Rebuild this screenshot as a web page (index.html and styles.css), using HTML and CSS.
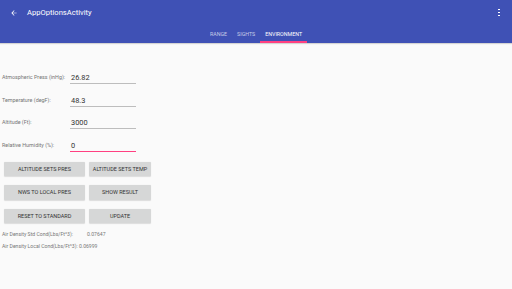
FILE: index.html
```html
<!DOCTYPE html>
<html lang="en">
<head>
    <meta charset="UTF-8">
    <meta name="viewport" content="width=device-width, initial-scale=1.0">
    <title>AppOptionsActivity</title>
    <link rel="stylesheet" href="styles.css">
</head>
<body>

    <!-- App Bar -->
    <header class="appbar">
        <div class="toolbar">
            <svg class="back" width="8" height="8" viewBox="0 0 24 24">
                <path d="M20 11H7.83l5.59-5.59L12 4l-8 8 8 8 1.41-1.41L7.83 13H20v-2z" fill="#fff"/>
            </svg>
            <span class="title">AppOptionsActivity</span>
            <span class="overflow"><i></i><i></i><i></i></span>
        </div>
        <nav class="tabs">
            <span class="tab">RANGE</span>
            <span class="tab">SIGHTS</span>
            <span class="tab active">ENVIRONMENT</span>
        </nav>
    </header>

    <!-- Environment Form -->
    <main class="content">
        <div class="field">
            <label class="field-label">Atmospheric Press (inHg):</label>
            <div class="field-input">26.82</div>
        </div>
        <div class="field">
            <label class="field-label">Temperature (degF):</label>
            <div class="field-input">48.3</div>
        </div>
        <div class="field">
            <label class="field-label">Altitude (Ft):</label>
            <div class="field-input">3000</div>
        </div>
        <div class="field">
            <label class="field-label">Relative Humidity (%):</label>
            <div class="field-input focused">0</div>
        </div>

        <div class="buttons">
            <div class="btn-row">
                <button class="btn wide">ALTITUDE SETS PRES</button>
                <button class="btn">ALTITUDE SETS TEMP</button>
            </div>
            <div class="btn-row">
                <button class="btn wide">NWS TO LOCAL PRES</button>
                <button class="btn">SHOW RESULT</button>
            </div>
            <div class="btn-row">
                <button class="btn wide">RESET TO STANDARD</button>
                <button class="btn">UPDATE</button>
            </div>
        </div>

        <div class="results">
            <p class="result"><span class="result-label">Air Density Std Cond(Lbs/Ft^3):</span>0.07647</p>
            <p class="result">Air Density Local Cond(Lbs/Ft^3): 0.06999</p>
        </div>
    </main>

</body>
</html>
```

FILE: styles.css
```css
/* General Page Styles */
body {
    font-family: 'Roboto', 'Liberation Sans', sans-serif;
    background: #fafafa;
    color: #333;
    margin: 0;
}

/* App Bar */
.appbar {
    background: #3f51b5;
    height: 43px;
    box-shadow: 0 1px 1px rgba(0, 0, 0, 0.15);
    display: flex;
    flex-direction: column;
}

.toolbar {
    height: 25px;
    display: flex;
    align-items: center;
    padding: 0 0 0 10px;
}

.toolbar .back {
    width: 8px;
    height: 8px;
}

.toolbar .title {
    color: #fff;
    font-size: 7.6px;
    font-weight: 400;
    margin-left: 9px;
}

.toolbar .overflow {
    margin-left: auto;
    margin-right: 12px;
    display: flex;
    flex-direction: column;
    gap: 1.3px;
}

.toolbar .overflow i {
    display: block;
    width: 1.7px;
    height: 1.7px;
    background: #fff;
}

/* Tabs */
.tabs {
    flex: 1;
    display: flex;
    justify-content: center;
}

.tab {
    padding: 1px 5px 0;
    font-size: 5.3px;
    font-weight: 400;
    color: rgba(255, 255, 255, 0.7);
    display: flex;
    align-items: center;
    border-bottom: 2px solid transparent;
}

.tab.active {
    color: #fff;
    border-bottom-color: #ff4081;
}

/* Form */
.content {
    padding: 29px 0 0 2px;
}

.field {
    display: flex;
    align-items: flex-end;
    height: 12px;
    margin-bottom: 10.5px;
}

.field-label {
    width: 68px;
    font-size: 5.4px;
    color: #757575;
    line-height: 11px;
    padding-bottom: 1px;
}

.field-input {
    width: 65px;
    height: 11px;
    line-height: 11px;
    font-size: 7.4px;
    color: #333;
    padding-left: 1px;
    border-bottom: 1px solid #bdbdbd;
    box-sizing: content-box;
}

.field-input.focused {
    border-bottom-color: #ff4081;
}

/* Buttons */
.buttons {
    margin-top: -0.5px;
    padding-left: 2px;
    display: flex;
    flex-direction: column;
    gap: 9px;
}

.btn-row {
    display: flex;
    gap: 4px;
}

.btn {
    height: 14.5px;
    width: 62px;
    border: none;
    border-radius: 1px;
    background: #d6d7d7;
    box-shadow: 0 0.5px 1px rgba(0, 0, 0, 0.12);
    font-family: inherit;
    font-size: 5.5px;
    font-weight: 400;
    color: #333;
    padding: 0;
}

.btn.wide {
    width: 81px;
}

/* Results */
.results {
    padding-top: 5px;
}

.result {
    margin: 0;
    font-size: 5.1px;
    line-height: 12px;
    color: #777;
}

.result-label {
    display: inline-block;
    width: 85px;
}
```
